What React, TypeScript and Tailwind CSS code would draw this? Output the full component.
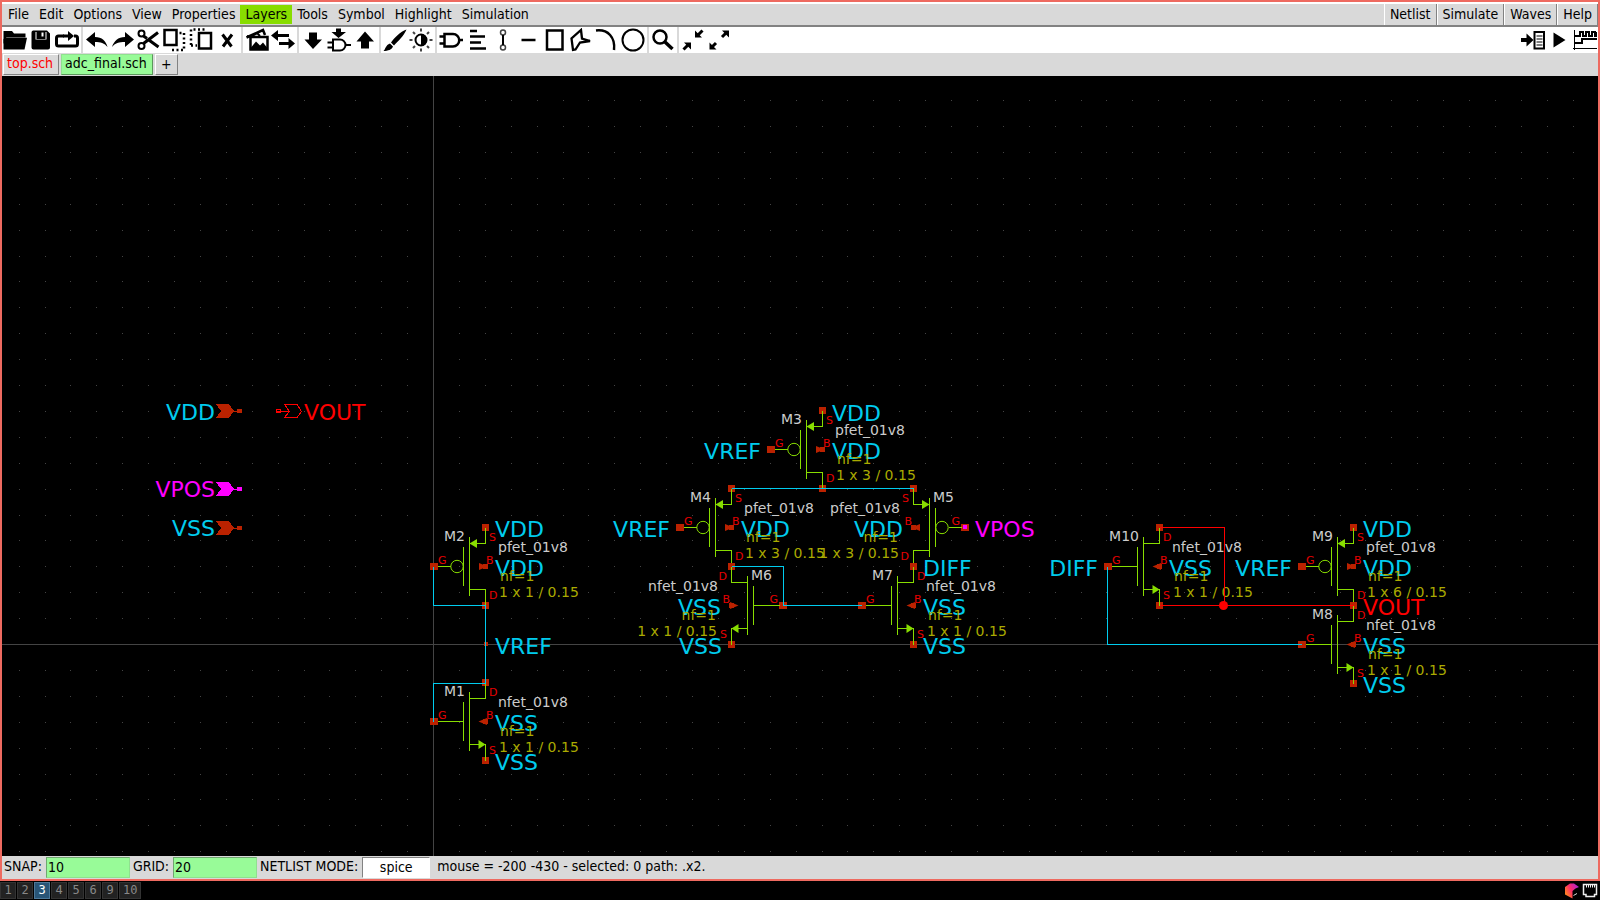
import { useState } from "react";
import type { ReactNode } from "react";

const UI = "font-['DejaVu_Sans_Condensed','DejaVu_Sans',sans-serif] text-[14px] leading-[19px]";

/* ---------- toolbar icons, all on a 24 x 24 grid ---------- */

function Icon({ children }: { children: ReactNode }) {
  return (
    <svg viewBox="0 0 24 24" className="block h-6 w-6" fill="none" stroke="#000" strokeWidth="2" aria-hidden="true">
      {children}
    </svg>
  );
}

const solid = { fill: "#000", stroke: "none" };

const icons: Record<string, ReactNode> = {
  open: (
    <g {...solid}>
      <path d="M0.500 3h8.500l2 2.500h11.500v4H3.500L0.500 16z" />
      <path d="M4 9.800h20L21.500 21.500H0.500V11z" />
    </g>
  ),
  save: (
    <g {...solid}>
      <path d="M4 2.500h14l3 3V19.500a2 2 0 0 1-2 2H4.500a2 2 0 0 1-2-2V4.500a2 2 0 0 1 1.500-2z" />
      <path d="M6.500 4h11v7.500h-11z" fill="#fff" />
      <path d="M7.500 3h9v8h-9z" />
      <path d="M12.500 4.500h2v4h-2z" fill="#fff" />
    </g>
  ),
  reload: (
    <g>
      <path d="M9 8H3.500a2 2 0 0 0-2 2v6a2 2 0 0 0 2 2h17a2 2 0 0 0 2-2v-6a2 2 0 0 0-2-2H19" strokeWidth="3" />
      <path d="M8 8h6" strokeWidth="3" />
      <path d="M13 3l6 5-6 5z" {...solid} />
    </g>
  ),
  undo: <path d="M1 11.500L10 4v5c7 0 11 4 12.500 10-3-4-7-5-12.500-5v5z" {...solid} />,
  redo: <path d="M23 11.500L14 4v5C7 9 3 13 1 19c3-4 7-5 13-5v5z" {...solid} />,
  cut: (
    <g>
      <circle cx="4.500" cy="5.500" r="3" />
      <circle cx="4.500" cy="18" r="3" />
      <path d="M6.500 8L10 10.500M6.500 15.500L21 4.500M10.500 11L21.500 19" strokeWidth="3" />
    </g>
  ),
  copy: (
    <g strokeWidth="2.500">
      <path d="M1.500 2h12v15h-12z" />
      <path d="M16.500 5h2M21 5v17H8" strokeDasharray="2 2.500" />
    </g>
  ),
  paste: (
    <g strokeWidth="2.500">
      <path d="M10 5h12v15.500H10z" />
      <path d="M2 17V1.500h14M2 17.500h6" strokeDasharray="2 2.500" />
    </g>
  ),
  remove: <path d="M7.500 6.500l9 12M17 6.500l-9 12" strokeWidth="3" />,
  image: (
    <g>
      <path d="M1.500 9.500L18 2l2 5" strokeWidth="2.500" />
      <path d="M2 8l4 1 6-4 3 3" />
      <path d="M5.500 9h17v12.500h-17z" strokeWidth="2.500" />
      <path d="M6 19.500l5-6 4 4 3-3 4 5v2H6z" {...solid} />
    </g>
  ),
  swap: (
    <g>
      <path d="M4 7.500h14M8 15.500h12" strokeWidth="3" />
      <path d="M7 2v11L0 7.500zM17.500 10v11l6.500-5.500z" {...solid} />
    </g>
  ),
  down: <path d="M8 4.500h8v7h5L12 21 3.500 11.500H8z" {...solid} />,
  descend: (
    <g>
      <path d="M9 0.500h5V4h5l-7.500 6L4.500 4H9z" {...solid} />
      <path d="M6 11.500h7a5.500 5.500 0 0 1 0 11H6zM0.500 14.500H6M0.500 19.500H6M19 17h5" />
    </g>
  ),
  up: <path d="M8 20.500h8v-7h5L12 3.500 3.500 13.500H8z" {...solid} />,
  brush: (
    <g {...solid}>
      <path d="M23.500 1.500C17 4 12 9 8 14.500l3 3C15 13 21 8 23.500 1.500z" />
      <path d="M7 15.500l3 3c-1 3-5 4.500-9.500 4.500 2-1.500 2-6 6.500-7.500z" />
    </g>
  ),
  contrast: (
    <g>
      <circle cx="12" cy="12" r="5.500" />
      <path d="M12 6v12a6 6 0 0 0 0-12z" {...solid} />
      <path d="M12 0.500v3M12 20.500v3M0.500 12h3M20.500 12h3M4 4l2 2M18 18l2 2M4 20l2-2M18 6l2-2" stroke="#444" />
    </g>
  ),
  gate: <path d="M5.500 6H14a6 6 0 0 1 0 12.500H5.500zM0.500 8.500h5M0.500 15.500h5M20 12h4" strokeWidth="2.500" />,
  text: <path d="M5 3h7M5 8.500h15M5 14.500h11M5 20.500h16" strokeWidth="2.500" />,
  wire: (
    <g>
      <circle cx="12" cy="4.500" r="2.500" stroke="#444" strokeWidth="1.500" />
      <circle cx="12" cy="19.500" r="2.500" stroke="#444" strokeWidth="1.500" />
      <path d="M12 7v10" />
    </g>
  ),
  line: <path d="M4.500 12h14" strokeWidth="2.500" />,
  rect: <path d="M4 2.500h15.500v19H4z" strokeWidth="2.500" />,
  polygon: <path d="M12 2l1 8.500 8 2.500-10 1.500-4.500 7L4 22 2.500 10.500z" strokeWidth="2.300" />,
  arc: <path d="M1 2.500c12-1.500 19.500 7 18 19.500" strokeWidth="2.500" />,
  circle: <circle cx="12" cy="12" r="10.500" />,
  zoom: (
    <g>
      <circle cx="9" cy="9" r="6.500" strokeWidth="2.500" />
      <path d="M13.500 13.500l8 7.500" strokeWidth="3.500" />
    </g>
  ),
  shrink: (
    <g>
      <path d="M2.500 21.500l5-5M21.500 2.500l-5 5" strokeWidth="3" />
      <path d="M3 14.500h7v7zM14 2.500v7h7z" {...solid} />
    </g>
  ),
  grow: (
    <g>
      <path d="M4 20l5-5M20 4l-5 5" strokeWidth="3" />
      <path d="M2.500 14.500v7h7zM15 2.500h7v7z" {...solid} />
    </g>
  ),
  netlist: (
    <g>
      <path d="M0 10h5.500V5.500l7 6.500-7 6.500V14H0z" {...solid} />
      <path d="M13.500 4h9.500v16.500h-9.500z" />
      <path d="M15.500 8h6M15.500 11h6M15.500 14h6M15.500 17h6" strokeWidth="1" />
    </g>
  ),
  play: <path d="M6.500 4.500l12 7.500-12 7.500z" {...solid} />,
  waves: (
    <g>
      <path d="M1.500 2v20M0 20.500h24" strokeWidth="1" />
      <path d="M1 8h6V4h3v4h3V4h3v4h3V4h3v4h2V4M1 15h8v-4h15" />
    </g>
  ),
};

const toolGroups: string[][] = [
  ["open", "save", "reload"],
  ["undo", "redo", "cut", "copy", "paste", "remove"],
  ["image", "swap"],
  ["down", "descend", "up"],
  ["brush", "contrast"],
  ["gate", "text", "wire", "line", "rect", "polygon", "arc", "circle"],
  ["zoom"],
  ["shrink", "grow"],
];

function ToolButton({ name }: { name: string }) {
  return (
    <button type="button" aria-label={name} className="flex h-[26px] w-[26px] items-center justify-center bg-white">
      <Icon>{icons[name]}</Icon>
    </button>
  );
}

/* ---------- schematic ---------- */

const CYAN = "#00ccee";
const PIN = "#bb2200";
const GREEN = "#88dd00";
const RED = "#ff0000";
const MAGENTA = "#ff00ff";

const STEP = 25.9;
const ORIGIN = { x: 433, y: 644 };

function gridPath(cols: number, rows: number) {
  let d = "";
  for (let i = -16; i < cols; i++) {
    if (i === 0) continue;
    for (let j = -21; j < rows; j++) {
      if (j === 0) continue;
      d += `M${Math.round(ORIGIN.x + i * STEP)} ${Math.round(ORIGIN.y + j * STEP)}h1v1h-1z`;
    }
  }
  return d;
}
const GRID = gridPath(100, 40);

type Label = { x: number; y: number; t: string; color?: string; end?: boolean };

function NetLabel({ x, y, t, color = CYAN, end }: Label) {
  return (
    <text x={x} y={y} fill={color} textAnchor={end ? "end" : "start"} className="text-[22px]">
      {t}
    </text>
  );
}

type Device = {
  name: string;
  x: number;
  y: number;
  kind: "pfet" | "nfet";
  size: string;
  flip?: boolean;
};

const devices: Device[] = [
  { name: "M1", x: 485, y: 721, kind: "nfet", size: "1 x 1 / 0.15" },
  { name: "M2", x: 485, y: 566, kind: "pfet", size: "1 x 1 / 0.15" },
  { name: "M3", x: 822, y: 449, kind: "pfet", size: "1 x 3 / 0.15" },
  { name: "M4", x: 731, y: 527, kind: "pfet", size: "1 x 3 / 0.15" },
  { name: "M5", x: 913, y: 527, kind: "pfet", size: "1 x 3 / 0.15", flip: true },
  { name: "M6", x: 731, y: 605, kind: "nfet", size: "1 x 1 / 0.15", flip: true },
  { name: "M7", x: 913, y: 605, kind: "nfet", size: "1 x 1 / 0.15" },
  { name: "M10", x: 1159, y: 566, kind: "nfet", size: "1 x 1 / 0.15" },
  { name: "M9", x: 1353, y: 566, kind: "pfet", size: "1 x 6 / 0.15" },
  { name: "M8", x: 1353, y: 644, kind: "nfet", size: "1 x 1 / 0.15" },
];

function DeviceSymbol({ x, y, kind, flip }: Device) {
  const p = kind === "pfet";
  return (
    <g transform={`translate(${x + 0.5} ${y + 0.5}) scale(${flip ? -1 : 1} 1)`}>
      <g fill={PIN}>
        <rect x="-3.5" y="-42.500" width="7" height="7" />
        <rect x="-3.5" y="35.500" width="7" height="7" />
        <rect x="-55.5" y="-3.500" width="8" height="7" />
        <rect x="-2.5" y="-2.500" width="5" height="5" />
        <path d={p ? "M-6.500 -3.500L2 0L-6.500 3.500z" : "M-7 0L1.500 -3.500V3.500z"} />
      </g>
      <g stroke={GREEN} fill="none" strokeWidth="1">
        <path d="M0 -39V-23H-16M0 39V23H-16M-16 -29.500V29.500M-22 -19.500V19.500" shapeRendering="crispEdges" />
        <path d={p ? "M-48 0H-35" : "M-48 0H-22"} shapeRendering="crispEdges" />
        {p && <circle cx="-28.5" cy="0" r="6.200" />}
      </g>
      <path d={p ? "M-16 -23L-8.500 -27.500V-18.500z" : "M0 23L-7 18.500V27.500z"} fill={GREEN} />
    </g>
  );
}

function DeviceText({ name, x, y, kind, size, flip }: Device) {
  const p = kind === "pfet";
  const s = flip ? -1 : 1;
  const at = (dx: number) => x + s * dx;
  return (
    <g textAnchor={flip ? "end" : "start"}>
      <text x={at(-20)} y={y - 25} fill="#cccccc" textAnchor={flip ? "start" : "end"} className="text-[14px]">
        {name}
      </text>
      <g fill="#e60000" className="text-[11px]">
        <text x={at(4)} y={y - 25}>{p ? "S" : "D"}</text>
        <text x={at(4)} y={y + 33}>{p ? "D" : "S"}</text>
        <text x={at(1)} y={y - 2}>B</text>
        <text x={at(-47)} y={y - 2}>G</text>
      </g>
      <text x={at(13)} y={y - 14} fill="#cccccc" className="text-[14px]">
        {kind}_01v8
      </text>
      <NetLabel x={at(10)} y={y + 10} t={p ? "VDD" : "VSS"} end={flip} />
      <g fill="#aaaa00" className="text-[14px]">
        <text x={at(15)} y={y + 15}>nf=1</text>
        <text x={at(14)} y={y + 31}>{size}</text>
      </g>
    </g>
  );
}

const labels: Label[] = [
  { x: 495, y: 537, t: "VDD" },
  { x: 495, y: 654, t: "VREF" },
  { x: 495, y: 770, t: "VSS" },
  { x: 832, y: 421, t: "VDD" },
  { x: 761, y: 459, t: "VREF", end: true },
  { x: 670, y: 537, t: "VREF", end: true },
  { x: 975, y: 537, t: "VPOS", color: MAGENTA },
  { x: 923, y: 576, t: "DIFF" },
  { x: 722, y: 654, t: "VSS", end: true },
  { x: 923, y: 654, t: "VSS" },
  { x: 1098, y: 576, t: "DIFF", end: true },
  { x: 1292, y: 576, t: "VREF", end: true },
  { x: 1363, y: 537, t: "VDD" },
  { x: 1363, y: 615, t: "VOUT", color: RED },
  { x: 1363, y: 693, t: "VSS" },
  { x: 215, y: 420, t: "VDD", end: true },
  { x: 215, y: 497, t: "VPOS", color: MAGENTA, end: true },
  { x: 215, y: 536, t: "VSS", end: true },
  { x: 304, y: 420, t: "VOUT", color: RED },
];

function InputPort({ y, color }: { y: number; color: string }) {
  return (
    <g transform={`translate(216 ${y})`} fill={color} shapeRendering="crispEdges">
      <path d="M0 -7H13L18 0L13 7H0L5 0z" />
      <path d="M16 0h6v1h-6zM21 -2h5v4h-5z" />
    </g>
  );
}

function Schematic() {
  return (
    <svg
      role="img"
      aria-label="Schematic adc_final.sch"
      className="block h-full w-full font-['DejaVu_Sans',sans-serif]"
    >
      <g transform="translate(-2 -76)">
        <path d={GRID} fill="#444444" shapeRendering="crispEdges" />
        <g fill="#444444">
          <rect x={ORIGIN.x} y="0" width="1" height="4000" />
          <rect x="0" y={ORIGIN.y} width="6000" height="1" />
        </g>

        <InputPort y={411} color={PIN} />
        <InputPort y={489} color={MAGENTA} />
        <InputPort y={528} color={PIN} />
        <g stroke={RED} fill="none" shapeRendering="crispEdges">
          <path d="M276.500 409.500h4v3h-4zM277 411.500H289" />
          <path d="M284.500 404.500H297L301.500 411.500L297 417.500H284.500L289.500 411.500z" />
        </g>

        {devices.map((d) => (
          <DeviceSymbol key={d.name} {...d} />
        ))}
        <rect x="484" y="642" width="4" height="4" fill={PIN} />
        <rect x="963" y="525" width="4" height="4" fill={MAGENTA} />

        {labels.map((l, i) => (
          <NetLabel key={i} {...l} />
        ))}
        {devices.map((d) => (
          <DeviceText key={d.name} {...d} />
        ))}

        <g transform="translate(0.5 0.5)" fill="none" shapeRendering="crispEdges">
          <path
            stroke={CYAN}
            d="M433 566V605H485V683H433V721M731 488H913M731 566H783V605H861M1107 566V644H1301"
          />
          <path stroke={RED} d="M1159 527H1224V605M1159 605H1353" />
        </g>
        <circle cx="1223.500" cy="605.500" r="4.500" fill={RED} />
      </g>
    </svg>
  );
}

/* ---------- window ---------- */

const menus = ["File", "Edit", "Options", "View", "Properties", "Layers", "Tools", "Symbol", "Highlight", "Simulation"];
const actions = ["Netlist", "Simulate", "Waves", "Help"];
const desks = ["1", "2", "3", "4", "5", "6", "9", "10"];

export default function App() {
  const [snap, setSnap] = useState("10");
  const [grid, setGrid] = useState("20");
  const [mode, setMode] = useState("spice");
  const field =
    "h-[21px] border border-t-[#6fa86f] border-l-[#6fa86f] border-r-[#8fe08f] border-b-[#8fe08f] bg-[#98fb98] px-px pb-[2px] outline-none";

  return (
    <div className={`flex h-screen flex-col overflow-hidden bg-black text-black ${UI}`}>
      <div className="flex min-h-0 flex-1 flex-col border-2 border-[#ee6a60] bg-[#d9d9d9]">
        <nav className="flex h-[25px] shrink-0 items-stretch border-t-2 border-b-2 border-t-white border-b-[#828282] pl-px">
          {menus.map((m) => (
            <button
              key={m}
              type="button"
              className={m === "Layers" ? "my-px bg-[#88dd00] px-[5px]" : "my-px px-[5px]"}
            >
              {m}
            </button>
          ))}
          <div className="ml-auto flex">
            {actions.map((a) => (
              <button key={a} type="button" className="border-r border-l border-r-[#828282] border-l-white px-[5px]">
                {a}
              </button>
            ))}
          </div>
        </nav>

        <div className="flex h-[26px] shrink-0 bg-white">
          {toolGroups.map((g, i) => (
            <div key={i} className="flex">
              {i > 0 && <span className="mx-px w-[2px] bg-[#d9d9d9]" />}
              {g.map((n) => (
                <ToolButton key={n} name={n} />
              ))}
            </div>
          ))}
          <div className="ml-auto flex">
            <ToolButton name="netlist" />
            <ToolButton name="play" />
            <ToolButton name="waves" />
          </div>
        </div>

        <div className="flex h-[23px] shrink-0 gap-[2px] pt-px pb-px pl-px" role="tablist">
          <button
            type="button"
            role="tab"
            aria-selected="false"
            className="flex items-center border border-t-white border-r-[#828282] border-b-[#828282] border-l-white pr-[5px] pb-[3px] pl-[3px] text-[#ff0000]"
          >
            top.sch
          </button>
          <button
            type="button"
            role="tab"
            aria-selected="true"
            className="flex items-center border border-t-[#8fe08f] border-r-[#5b975b] border-b-[#5b975b] border-l-[#8fe08f] bg-[#98fb98] pr-[5px] pb-[3px] pl-[3px]"
          >
            adc_final.sch
          </button>
          <button
            type="button"
            aria-label="New tab"
            className="flex w-[23px] items-center justify-center border border-t-white border-r-[#828282] border-b-[#828282] border-l-white"
          >
            +
          </button>
        </div>

        <main className="min-h-0 flex-1 bg-black">
          <Schematic />
        </main>

        <footer className="flex h-[23px] shrink-0 items-center pl-[2px]">
          <label htmlFor="snap" className="mr-1 pb-[2px]">SNAP:</label>
          <input id="snap" value={snap} onChange={(e) => setSnap(e.target.value)} className={`w-[84px] ${field}`} />
          <label htmlFor="grid" className="mr-1 ml-[3px] pb-[2px]">GRID:</label>
          <input id="grid" value={grid} onChange={(e) => setGrid(e.target.value)} className={`w-[84px] ${field}`} />
          <label htmlFor="mode" className="mr-1 ml-[3px] pb-[2px]">NETLIST MODE:</label>
          <input
            id="mode"
            value={mode}
            onChange={(e) => setMode(e.target.value)}
            className="h-[21px] w-[68px] border border-t-[#828282] border-r-white border-b-white border-l-[#828282] bg-white pb-[2px] text-center outline-none"
          />
          <span className="ml-[7px] pb-[2px] whitespace-pre">mouse = -200 -430 - selected: 0 path: .x2.</span>
        </footer>
      </div>

      <div className="flex h-[19px] shrink-0 items-center bg-black">
        <div className="flex gap-px font-['DejaVu_Sans_Mono',monospace] text-[12px] leading-[15px]">
          {desks.map((d) => (
            <button
              key={d}
              type="button"
              className={
                d === "3"
                  ? "h-[17px] min-w-4 border border-[#4c7899] bg-[#285577] px-[3px] text-white"
                  : "h-[17px] min-w-4 border border-[#333333] bg-[#222222] px-[3px] text-[#888888]"
              }
            >
              {d}
            </button>
          ))}
        </div>
        <div className="ml-auto flex gap-[2px] pr-[2px]">
          <svg viewBox="0 0 16 16" className="h-4 w-4" aria-hidden="true">
            <defs>
              <linearGradient id="cube" x1="0" y1="0.700" x2="1" y2="0.100">
                <stop offset="0" stopColor="#ff8a1c" />
                <stop offset="0.450" stopColor="#fc2a6a" />
                <stop offset="1" stopColor="#a020e0" />
              </linearGradient>
            </defs>
            <path d="M6 0.500H10L15 4L11.500 5.500L8.500 8V15.500L1 11.500V4z" fill="url(#cube)" />
            <path d="M9.500 12.500L13 10.500" stroke="#dddddd" />
          </svg>
          <svg viewBox="0 0 16 16" className="h-4 w-4" fill="none" stroke="#eeeeee" aria-hidden="true">
            <path d="M1.500 1.500h13v10h-2v2H4v-2H1.500z" strokeWidth="1.500" />
            <path d="M4.500 2v2.500M6.500 2v2.500M8.500 2v2.500M10.500 2v2.500M12.500 2v2.500" strokeWidth="1" />
          </svg>
        </div>
      </div>
    </div>
  );
}
